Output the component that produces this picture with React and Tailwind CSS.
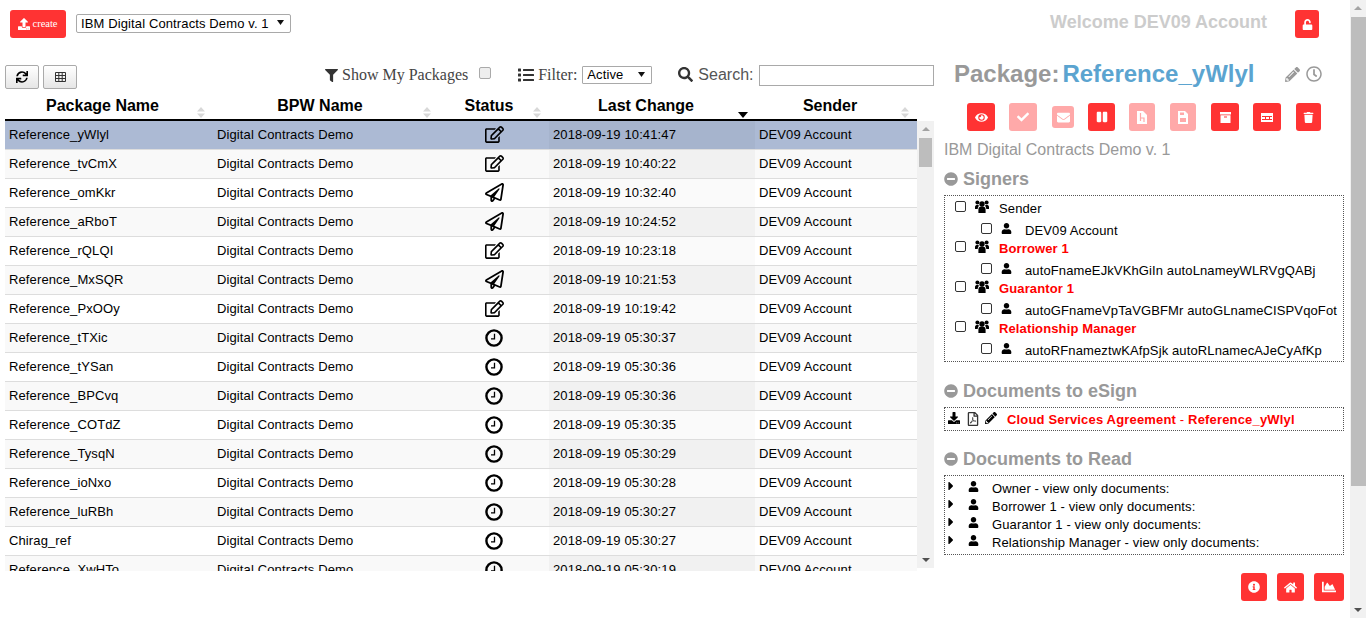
import React from "react";
import {
  FaUpload, FaSync, FaFilter, FaList, FaSearch, FaUnlock, FaPencilAlt, FaEye, FaCheck,
  FaEnvelope, FaPause, FaTrash, FaMinusCircle, FaUser, FaDownload,
  FaRegFilePdf, FaCaretRight, FaInfoCircle, FaHome, FaChartArea, FaRegEdit, FaRegPaperPlane, FaRegClock,
} from "react-icons/fa";

const rows = [
  ["Reference_yWlyl", "e", "2018-09-19 10:41:47"],
  ["Reference_tvCmX", "e", "2018-09-19 10:40:22"],
  ["Reference_omKkr", "p", "2018-09-19 10:32:40"],
  ["Reference_aRboT", "p", "2018-09-19 10:24:52"],
  ["Reference_rQLQI", "e", "2018-09-19 10:23:18"],
  ["Reference_MxSQR", "p", "2018-09-19 10:21:53"],
  ["Reference_PxOOy", "e", "2018-09-19 10:19:42"],
  ["Reference_tTXic", "c", "2018-09-19 05:30:37"],
  ["Reference_tYSan", "c", "2018-09-19 05:30:36"],
  ["Reference_BPCvq", "c", "2018-09-19 05:30:36"],
  ["Reference_COTdZ", "c", "2018-09-19 05:30:35"],
  ["Reference_TysqN", "c", "2018-09-19 05:30:29"],
  ["Reference_ioNxo", "c", "2018-09-19 05:30:28"],
  ["Reference_luRBh", "c", "2018-09-19 05:30:27"],
  ["Chirag_ref", "c", "2018-09-19 05:30:27"],
  ["Reference_XwHTo", "c", "2018-09-19 05:30:19"],
];

function ClockIcon() {
  return (
    <svg width="18" height="18" viewBox="0 0 18 18" fill="none" stroke="#000">
      <circle cx="9" cy="9" r="7.600" strokeWidth="2.400" />
      <path d="M9.500 4.800V9.800H6" strokeWidth="1.300" />
    </svg>
  );
}

function StatusIcon({ k }) {
  if (k === "e") return <FaRegEdit className="mt-[-2px] ml-[1px] text-[19px] text-black" />;
  if (k === "p") return <FaRegPaperPlane className="mt-[-2px] text-[19px] text-black" />;
  return <ClockIcon />;
}

function SortArrows({ active }) {
  return (
    <span className="absolute right-[7px] bottom-[1px] flex flex-col items-center leading-none">
      {active ? (
        <svg width="10" height="6" viewBox="0 0 10 6"><path d="M0 0h10L5 6z" fill="#000" /></svg>
      ) : (
        <svg width="10" height="11" viewBox="0 0 10 11"><path d="M5 0l4 4.500H1zM5 11L1 6.500h8z" fill="#d8d8d8" /></svg>
      )}
    </span>
  );
}

function RedBtn({ w = "w-7", h = "h-7", faded, children, cls = "" }) {
  return (
    <span className={`inline-flex items-center justify-center rounded-[3px] text-white text-[12px] ${w} ${h} ${faded ? "bg-[#ffa9a9]" : "bg-[#ff3333]"} ${cls}`}>
      {children}
    </span>
  );
}

function Heading({ children, cls }) {
  return (
    <div className={`flex items-center gap-[5px] text-[18px] leading-5 font-bold text-[#999999] ${cls}`}>
      <FaMinusCircle className="text-[14px]" />
      <span>{children}</span>
    </div>
  );
}

function UsersIcon() {
  return (
    <svg className="shrink-0" width="14" height="13" viewBox="0 0 14 13" fill="#000">
      <circle cx="7" cy="4" r="2.700" />
      <path d="M3.400 13V9.800a3.200 3.200 0 0 1 3.200-3.200h.8a3.200 3.200 0 0 1 3.200 3.200V13z" />
      <circle cx="2.400" cy="2.600" r="2" />
      <circle cx="11.600" cy="2.600" r="2" />
      <path d="M0 9V7C0 5.600 1 5 2.400 5c.7 0 1.100.2 1.500.4C3.600 6.500 2.800 7.500 2.700 9z" />
      <path d="M14 9V7c0-1.400-1-2-2.400-2-.7 0-1.100.2-1.500.4.300 1.100 1.100 2.100 1.200 3.600z" />
    </svg>
  );
}

function Box({ cls = "" }) {
  return <input type="checkbox" className={`size-[11px] shrink-0 appearance-none rounded-[2px] border border-[#333333] bg-white ${cls}`} />;
}

function Group({ red, name }) {
  return (
    <div className="flex h-5 items-start pl-[10px]">
      <Box cls="mt-[1px]" />
      <span className="ml-[9px]"><UsersIcon /></span>
      <span className={`ml-[10px] text-[13px] leading-5 mt-[-1px] tracking-[0.12px] ${red ? "font-bold text-[#ff0000]" : "text-black"}`}>{name}</span>
    </div>
  );
}

function Person({ name }) {
  return (
    <div className="flex h-5 items-start pl-[36px]">
      <Box cls="mt-[3px]" />
      <FaUser className="ml-[9px] mt-[3px] text-[11px] text-black" />
      <span className="ml-[13px] text-[13px] leading-5 mt-[1px] whitespace-nowrap tracking-[0.12px] text-black">{name}</span>
    </div>
  );
}

function ReadRow({ name }) {
  return (
    <div className="flex h-[18px] items-start">
      <FaCaretRight className="-ml-[1px] text-[14px] text-black" />
      <FaUser className="ml-[10px] mt-[2px] text-[11px] text-black" />
      <span className="ml-[13px] text-[13px] leading-[18px] mt-[1px] tracking-[0.12px] text-black">{name} - view only documents:</span>
    </div>
  );
}

function Caret() {
  return <svg className="absolute right-[7px] top-[6px]" width="7" height="5" viewBox="0 0 7 5"><path d="M0 0h7L3.500 5z" fill="#111" /></svg>;
}

function Scrollbar({ thumbTop, thumbH, cls, thumbCls }) {
  return (
    <div className={`relative shrink-0 bg-[#f1f1f1] ${cls}`}>
      <svg className="absolute left-1/2 -translate-x-1/2 top-[6px]" width="8" height="4" viewBox="0 0 8 4"><path d="M4 0l4 4H0z" fill="#a3a3a3" /></svg>
      <div className={`absolute bg-[#bdbdbd] ${thumbCls}`} style={{ top: thumbTop, height: thumbH }} />
      <svg className="absolute left-1/2 -translate-x-1/2 bottom-[6px]" width="8" height="4" viewBox="0 0 8 4"><path d="M0 0h8L4 4z" fill="#505050" /></svg>
    </div>
  );
}

const columns = "grid-cols-[208px_226px_110px_206px_162px]";

export default function App() {
  return (
    <div className="flex h-[618px] w-[1366px] overflow-hidden bg-white font-['Liberation_Sans',Arial,sans-serif] text-black">
      <div className="flex w-[1350px] shrink-0 flex-col">
        {/* Top bar */}
        <div className="flex h-[65px] shrink-0 items-start pt-[10px] pl-[10px]">
          <RedBtn w="w-14" h="h-7" cls="gap-[2px]">
            <FaUpload className="text-[12px]" />
            <span className="font-['Liberation_Serif',serif] text-[10.500px]">create</span>
          </RedBtn>
          <div className="relative ml-[10px] mt-[4px] h-[19px] w-[215px]">
            <select className="block h-full w-full appearance-none rounded-[2px] border border-[#a9a9a9] bg-white pl-1 text-[13px] leading-[17px] tracking-[0.12px] text-black" defaultValue="a">
              <option value="a">IBM Digital Contracts Demo v. 1</option>
            </select>
            <Caret />
          </div>
          <div className="ml-[759px] text-[18px] leading-6 font-bold text-[#cccccc]">Welcome DEV09 Account</div>
          <RedBtn w="w-6" h="h-7" cls="ml-[28px]"><FaUnlock className="text-[11px]" /></RedBtn>
        </div>

        <div className="flex min-h-0 flex-1">
          {/* Left column */}
          <div className="ml-[5px] flex w-[929px] shrink-0 flex-col">
            <div className="flex h-[30px] shrink-0 items-start">
              <button className="flex h-6 w-[34px] shrink-0 items-center justify-center rounded-[2px] border border-[#aaaaaa] bg-gradient-to-b from-white to-[#e6e6e6] text-black"><FaSync className="text-[12px]" /></button>
              <button className="ml-1 flex h-6 w-[34px] shrink-0 items-center justify-center rounded-[2px] border border-[#aaaaaa] bg-gradient-to-b from-white to-[#e6e6e6] text-black">
                <svg width="11" height="10" viewBox="0 0 11 10" fill="none" stroke="#333333"><path d="M.5.500h10v9H.500zM.5 3.500h10M.5 6.500h10M3.800.500v9M7.200.500v9" /></svg>
              </button>
              <div className="ml-[248px] flex h-5 shrink-0 items-center gap-[4px] whitespace-nowrap font-['Liberation_Serif',serif] text-[16px] text-[#444444]">
                <FaFilter className="text-[13px] text-[#333333]" />
                <span>Show My Packages</span>
              </div>
              <input type="checkbox" disabled className="ml-[11px] mt-[2px] size-[12px] shrink-0 appearance-none rounded-[2px] border border-[#aaaaaa] bg-[#eeeeee]" />
              <div className="ml-[27px] flex h-5 shrink-0 items-center gap-[4px] font-['Liberation_Serif',serif] text-[16px] text-[#444444]">
                <FaList className="text-[16px] text-[#333333]" />
                <span>Filter:</span>
              </div>
              <div className="relative ml-[5px] mt-[1px] h-[18px] w-[70px] shrink-0">
                <select className="block h-full w-full appearance-none rounded-[1px] border border-[#a9a9a9] bg-white pl-1 text-[13px] leading-4 tracking-[0.12px] text-black" defaultValue="Active">
                  <option>Active</option>
                </select>
                <Caret />
              </div>
              <div className="ml-[26px] flex h-[19px] shrink-0 items-center gap-[5px] text-[16px] text-[#555555]">
                <FaSearch className="text-[15px] text-[#333333]" />
                <span>Search:</span>
              </div>
              <input className="ml-[6px] h-[21px] min-w-0 flex-1 border border-[#a9a9a9] bg-white" />
            </div>

            {/* table */}
            <div className={`grid h-[26px] w-[912px] shrink-0 ${columns} border-b-2 border-black text-[16px] leading-[21px] font-bold`}>
              {["Package Name", "BPW Name", "Status", "Last Change", "Sender"].map((h) => (
                <div key={h} className={`relative text-center ${h === "Status" ? "pr-[10px]" : h === "Package Name" ? "pr-[13px]" : "pr-[12px]"}`}>
                  {h}
                  <SortArrows active={h === "Last Change"} />
                </div>
              ))}
            </div>
            <div className="flex h-[450px] shrink-0 overflow-hidden">
              <div className="h-full w-[912px] shrink-0 overflow-hidden">
                {rows.map((r, i) => {
                  const sel = i === 0;
                  const odd = i % 2 === 0;
                  return (
                    <div key={r[0]} className={`grid h-[29px] ${columns} border-b border-[#dddddd] text-[13px] tracking-[0.12px] text-black ${sel ? "bg-[#acbad4]" : odd ? "bg-white" : "bg-[#f9f9f9]"}`}>
                      <div className="flex items-center pl-1">{r[0]}</div>
                      <div className="flex items-center pl-1">Digital Contracts Demo</div>
                      <div className="flex items-center justify-center"><StatusIcon k={r[1]} /></div>
                      <div className={`flex items-center pl-1 ${sel ? "bg-[#a6b4cd]" : odd ? "bg-[#fafafa]" : "bg-[#f1f1f1]"}`}>{r[2]}</div>
                      <div className="flex items-center pl-1">DEV09 Account</div>
                    </div>
                  );
                })}
              </div>
              <Scrollbar cls="h-[447px] w-[17px]" thumbTop={17} thumbH={29} thumbCls="left-[2px] w-[13px]" />
            </div>
          </div>

          {/* Right column */}
          <div className="ml-[10px] flex w-[400px] shrink-0 flex-col">
            <div className="ml-[10px] -mt-px flex h-[20px] items-center whitespace-nowrap text-[24px] leading-7 font-bold">
              <span className="text-[#999999]">Package:</span>
              <span className="ml-[3px] text-[#5ba4d0]">Reference_yWlyl</span>
              <FaPencilAlt className="ml-[30px] text-[15px] text-[#999999]" />
              <FaRegClock className="ml-[6px] text-[16px] text-[#999999]" />
            </div>
            <div className="mt-[19px] flex h-7 items-center pl-[23px]">
              <RedBtn><FaEye className="text-[13px]" /></RedBtn>
              <RedBtn faded cls="ml-[14px]"><FaCheck /></RedBtn>
              <RedBtn faded w="w-[22px]" h="h-[22px]" cls="ml-[15px]"><FaEnvelope className="text-[13px]" /></RedBtn>
              <RedBtn w="w-[27px]" cls="ml-[14px]"><FaPause /></RedBtn>
              <RedBtn faded w="w-[26px]" cls="ml-[14px]">
                <svg width="10" height="13" viewBox="0 0 10 13">
                  <path d="M0 0h6l4 4v9H0z" fill="#fff" />
                  <path d="M3.500 2v8M3.500 7h3.500v4" fill="none" stroke="#ffa9a9" strokeWidth="1.200" />
                </svg>
              </RedBtn>
              <RedBtn faded w="w-[26px]" cls="ml-[15px]">
                <svg width="10" height="13" viewBox="0 0 10 13">
                  <path d="M0 0h7l3 3v10H0z" fill="#fff" />
                  <path d="M2 1.500h4v2.500H2zM2 7h6v4H2z" fill="#ffa9a9" />
                </svg>
              </RedBtn>
              <RedBtn cls="ml-[15px]">
                <svg width="11" height="11" viewBox="0 0 11 11">
                  <path d="M0 0h11v2.500H0zM.5 3.200h10V11H.500z" fill="#fff" />
                  <path d="M4 4.500h3v1H4z" fill="#ff3333" />
                </svg>
              </RedBtn>
              <RedBtn cls="ml-[14px]">
                <svg width="12" height="9" viewBox="0 0 12 9">
                  <path d="M0 0h12v9H0z" fill="#fff" />
                  <path d="M1 3h10v1H1zM1 6h10v1H1zM4 4h1v2H4zM8 4h1v2H8z" fill="#ff3333" />
                </svg>
              </RedBtn>
              <RedBtn w="w-[25px]" cls="ml-[15px]"><FaTrash className="text-[11px]" /></RedBtn>
            </div>
            <div className="mt-[9px] text-[16px] leading-5 text-[#999999]">IBM Digital Contracts Demo v. 1</div>
            <Heading cls="mt-[9px]">Signers</Heading>
            <div className="mt-[6px] h-[167px] border border-dotted border-[#555555] pt-[4px]">
              <Group name="Sender" />
              <Person name="DEV09 Account" />
              <Group red name="Borrower 1" />
              <Person name="autoFnameEJkVKhGiIn autoLnameyWLRVgQABj" />
              <Group red name="Guarantor 1" />
              <Person name="autoGFnameVpTaVGBFMr autoGLnameCISPVqoFot" />
              <Group red name="Relationship Manager" />
              <Person name="autoRFnameztwKAfpSjk autoRLnamecAJeCyAfKp" />
            </div>
            <Heading cls="mt-[19px]">Documents to eSign</Heading>
            <div className="mt-[6px] flex h-6 items-center border border-dotted border-[#555555] pl-[3px]">
              <FaDownload className="mt-[-2px] text-[12px] text-black" />
              <FaRegFilePdf className="ml-[6px] mt-[-1px] text-[14px] text-[#333333]" />
              <FaPencilAlt className="ml-[5px] mt-[-2px] text-[12px] text-black" />
              <span className="ml-[10px] mt-[1px] text-[13px] font-bold tracking-[0.17px] text-[#ff0000]">Cloud Services Agreement <span className="font-normal">-</span> Reference_yWlyl</span>
            </div>
            <Heading cls="mt-[18px]">Documents to Read</Heading>
            <div className="mt-[6px] h-[80px] border border-dotted border-[#555555] pt-[3px]">
              <ReadRow name="Owner" />
              <ReadRow name="Borrower 1" />
              <ReadRow name="Guarantor 1" />
              <ReadRow name="Relationship Manager" />
            </div>
            <div className="mt-[18px] flex justify-end">
              <RedBtn w="w-[26px]"><FaInfoCircle /></RedBtn>
              <RedBtn w="w-[27px]" cls="ml-[10px]"><FaHome className="text-[13px]" /></RedBtn>
              <RedBtn w="w-[30px]" cls="ml-[10px]"><FaChartArea className="text-[14px]" /></RedBtn>
            </div>
          </div>
        </div>
      </div>
      <Scrollbar cls="h-[618px] w-[16px]" thumbTop={17} thumbH={469} thumbCls="left-[1px] w-[15px]" />
    </div>
  );
}
